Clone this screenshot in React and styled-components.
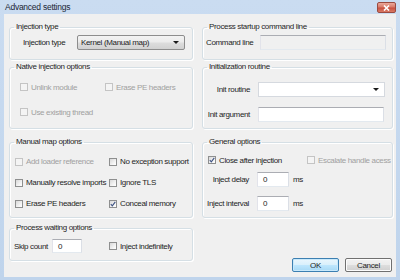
import React from 'react';
import styled, { createGlobalStyle } from 'styled-components';

const GlobalStyle = createGlobalStyle`
  html, body {
    margin: 0;
    padding: 0;
    overflow: hidden;
    background: #fff;
  }
  body {
    font-family: "Liberation Sans", Arial, sans-serif;
  }
`;

const FS = '8px';
const LS = '-0.35px';

// window chrome
const Window = styled.div`
  width: 400px;
  height: 280px;
  box-sizing: border-box;
  padding: 0 4px 3px 4px;
  display: flex;
  flex-direction: column;
  background: linear-gradient(#cadcf1, #bfd4ec);
`;

const TitleBar = styled.div`
  height: 14px;
  display: flex;
  align-items: flex-start;
  justify-content: space-between;
`;

const Title = styled.span`
  font-size: 8.5px;
  line-height: 14px;
  padding-left: 1px;
  color: #1b2635;
  letter-spacing: -0.25px;
`;

const CloseBtn = styled.div`
  width: 19px;
  height: 11px;
  margin-top: 2px;
  box-sizing: border-box;
  border: 1px solid #9a4a40;
  border-radius: 2px;
  background: linear-gradient(#eaa89a, #d87a6a 45%, #c8503f 55%, #d97a66);
  display: flex;
  align-items: center;
  justify-content: center;
`;

const Client = styled.div`
  flex: 1;
  background: #f0f0f0;
  display: grid;
  grid-template-columns: 184px 191px;
  grid-template-rows: 40px 75px 86px 1fr;
  column-gap: 9px;
  padding: 8px 3px 0 5px;
`;

// group boxes
const Group = styled.fieldset`
  margin: 0;
  padding: 0;
  min-width: 0;
  height: ${p => p.$h}px;
  box-sizing: border-box;
  border: 1px solid #d5dfe5;
  border-radius: 3px;
  box-shadow: inset 1px 1px 0 #fff, 1px 1px 0 #fff;
`;

const Legend = styled.legend`
  margin-left: 4px;
  padding: 0 2px;
  font-size: ${FS};
  line-height: 10px;
  letter-spacing: ${LS};
  color: #1e1e1e;
`;

const Body = styled.div`
  padding: ${p => p.$pad};
`;

const CheckGrid = styled.div`
  display: grid;
  grid-template-columns: ${p => p.$col}px 1fr;
  grid-auto-rows: ${p => p.$row || 10}px;
  row-gap: ${p => p.$gap}px;
  padding-left: ${p => p.$pl || 0}px;
`;

const FieldRow = styled.div`
  display: flex;
  align-items: center;
  margin-top: ${p => p.$mt || 0}px;
`;

const Label = styled.span`
  width: ${p => p.$w}px;
  flex: none;
  box-sizing: border-box;
  text-align: ${p => (p.$right ? 'right' : 'left')};
  padding-right: ${p => (p.$right ? 8 : 0)}px;
  font-size: ${FS};
  letter-spacing: ${LS};
  color: #1e1e1e;
  white-space: nowrap;
`;

const Unit = styled.span`
  margin-left: 4px;
  font-size: ${FS};
  letter-spacing: ${LS};
  color: #1e1e1e;
`;

const TextBox = styled.div`
  width: ${p => p.$w}px;
  height: ${p => p.$h || 15}px;
  box-sizing: border-box;
  border: 1px solid;
  border-color: #abadb3 #dbdfe6 #e3e9ef #e2e3ea;
  background: ${p => (p.$disabled ? '#f0f0f0' : '#fff')};
  font-size: ${FS};
  padding-left: 5px;
  display: flex;
  align-items: center;
  color: #1e1e1e;
`;

const Combo = styled.div`
  width: ${p => p.$w}px;
  height: 15px;
  box-sizing: border-box;
  display: flex;
  align-items: center;
  justify-content: space-between;
  padding: 0 5px 0 3px;
  font-size: ${FS};
  letter-spacing: ${LS};
  color: #1e1e1e;
  border: 1px solid ${p => (p.$flat ? '#d5d9df' : '#8d8d8d')};
  border-radius: ${p => (p.$flat ? 0 : 2)}px;
  background: ${p =>
    p.$flat
      ? '#fff'
      : 'linear-gradient(#f3f3f3, #ebebeb 48%, #dddddd 52%, #d1d1d1)'};
`;

const Arrow = styled.span`
  width: 0;
  height: 0;
  border-left: 3px solid transparent;
  border-right: 3px solid transparent;
  border-top: 3px solid #1a1a1a;
`;

// checkboxes
const CheckLabel = styled.label`
  display: flex;
  align-items: center;
  gap: 3px;
  font-size: ${FS};
  letter-spacing: ${LS};
  white-space: nowrap;
  color: ${p => (p.$disabled ? '#a0a0a0' : '#1e1e1e')};
  margin-left: ${p => p.$ml || 0}px;
`;

const Box = styled.span`
  width: 8px;
  height: 8px;
  flex: none;
  box-sizing: border-box;
  border: 1px solid ${p => (p.$disabled ? '#c4c4c4' : '#8e8f8f')};
  background: ${p =>
    p.$disabled ? '#f4f4f4' : 'linear-gradient(135deg, #d8d8d8, #f6f6f6 70%, #fff)'};
  display: flex;
  align-items: center;
  justify-content: center;
`;

const Check = ({ label, checked, disabled, ml }) => (
  <CheckLabel $disabled={disabled} $ml={ml}>
    <Box $disabled={disabled}>
      {checked && (
        <svg width="6" height="6" viewBox="0 0 6 6">
          <path d="M0.8 3.2 L2.3 4.8 L5.3 0.8" fill="none" stroke="#3d5283" strokeWidth="1.1" />
        </svg>
      )}
    </Box>
    {label}
  </CheckLabel>
);

// buttons
const ButtonRow = styled.div`
  display: flex;
  justify-content: flex-end;
  gap: 6px;
  margin-top: 35px;
  padding-right: 1px;
`;

const Button = styled.div`
  width: 47px;
  height: 14px;
  box-sizing: border-box;
  border: 1px solid ${p => (p.$default ? '#3c7fb1' : '#707070')};
  border-radius: 2px;
  background: ${p =>
    p.$default
      ? 'linear-gradient(#eaf6fd, #d9f0fc 48%, #bee6fd 52%, #a7d9f5)'
      : 'linear-gradient(#f2f2f2, #ebebeb 48%, #dddddd 52%, #cfcfcf)'};
  box-shadow: inset 0 0 0 1px ${p => (p.$default ? '#c9e9fb' : '#fcfcfc')};
  font-size: ${FS};
  letter-spacing: ${LS};
  color: #1e1e1e;
  display: flex;
  align-items: center;
  justify-content: center;
`;

export default function App() {
  return (
    <>
      <GlobalStyle />
      <Window>
        <TitleBar>
          <Title>Advanced settings</Title>
          <CloseBtn>
            <svg width="7" height="6" viewBox="0 0 7 6">
              <path d="M1 0.5 L6 5.5 M6 0.5 L1 5.5" stroke="#fff" strokeWidth="1.6" />
            </svg>
          </CloseBtn>
        </TitleBar>

        <Client>
          <Group $h={38}>
            <Legend>Injection type</Legend>
            <Body $pad="3px 0 0 13px">
              <FieldRow>
                <Label $w={54}>Injection type</Label>
                <Combo $w={108}>
                  Kernel (Manual map)
                  <Arrow />
                </Combo>
              </FieldRow>
            </Body>
          </Group>

          <Group $h={38}>
            <Legend>Process startup command line</Legend>
            <Body $pad="3px 0 0 3px">
              <FieldRow>
                <Label $w={54}>Command line</Label>
                <TextBox $w={126} $disabled />
              </FieldRow>
            </Body>
          </Group>

          <Group $h={67}>
            <Legend>Native injection options</Legend>
            <Body $pad="10px 0 0 10px">
              <CheckGrid $col={85} $gap={15}>
                <Check label="Unlink module" disabled />
                <Check label="Erase PE headers" disabled />
                <Check label="Use existing thread" disabled />
              </CheckGrid>
            </Body>
          </Group>

          <Group $h={67}>
            <Legend>Initialization routine</Legend>
            <Body $pad="10px 0 0 0">
              <FieldRow>
                <Label $w={55} $right>Init routine</Label>
                <Combo $w={127} $flat>
                  <span />
                  <Arrow />
                </Combo>
              </FieldRow>
              <FieldRow $mt={10}>
                <Label $w={55} $right>Init argument</Label>
                <TextBox $w={126} />
              </FieldRow>
            </Body>
          </Group>

          <Group $h={81}>
            <Legend>Manual map options</Legend>
            <Body $pad="9px 0 0 5px">
              <CheckGrid $col={94} $gap={10} $row={11}>
                <Check label="Add loader reference" disabled />
                <Check label="No exception support" />
                <Check label="Manually resolve imports" />
                <Check label="Ignore TLS" />
                <Check label="Erase PE headers" />
                <Check label="Conceal memory" checked />
              </CheckGrid>
            </Body>
          </Group>

          <Group $h={81}>
            <Legend>General options</Legend>
            <Body $pad="8px 0 0 0">
              <CheckGrid $col={99} $gap={0} $pl={5}>
                <Check label="Close after injection" checked />
                <Check label="Escalate handle acess" disabled />
              </CheckGrid>
              <FieldRow $mt={7}>
                <Label $w={54} $right>Inject delay</Label>
                <TextBox $w={32}>0</TextBox>
                <Unit>ms</Unit>
              </FieldRow>
              <FieldRow $mt={9}>
                <Label $w={54} $right>Inject interval</Label>
                <TextBox $w={32}>0</TextBox>
                <Unit>ms</Unit>
              </FieldRow>
            </Body>
          </Group>

          <Group $h={38}>
            <Legend>Process waiting options</Legend>
            <Body $pad="6px 0 0 4px">
              <FieldRow>
                <Label $w={38}>Skip count</Label>
                <TextBox $w={30} $h={14}>0</TextBox>
                <Check label="Inject indefinitely" ml={27} />
              </FieldRow>
            </Body>
          </Group>

          <ButtonRow>
            <Button $default>OK</Button>
            <Button>Cancel</Button>
          </ButtonRow>
        </Client>
      </Window>
    </>
  );
}
